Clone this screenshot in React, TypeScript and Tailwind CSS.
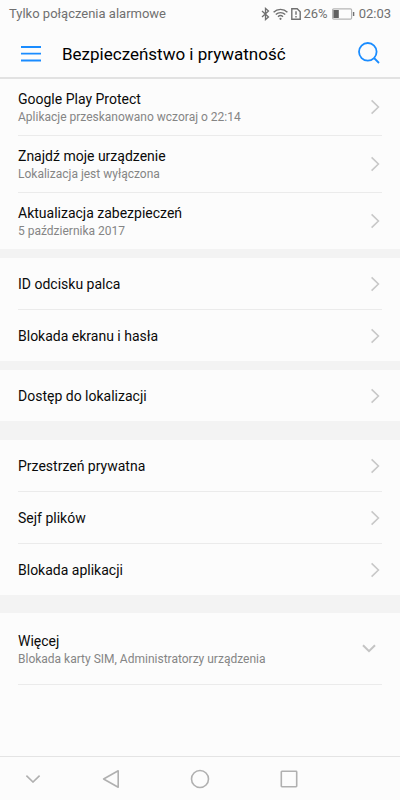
import { clsx } from "clsx"

type Item = { title: string; summary?: string }

const sections: { items: Item[]; gap: string }[] = [
  {
    items: [
      { title: "Google Play Protect", summary: "Aplikacje przeskanowano wczoraj o 22:14" },
      { title: "Znajdź moje urządzenie", summary: "Lokalizacja jest wyłączona" },
      { title: "Aktualizacja zabezpieczeń", summary: "5 października 2017" },
    ],
    gap: "h-[9px]",
  },
  { items: [{ title: "ID odcisku palca" }, { title: "Blokada ekranu i hasła" }], gap: "h-[9px]" },
  { items: [{ title: "Dostęp do lokalizacji" }], gap: "h-[19px]" },
  {
    items: [{ title: "Przestrzeń prywatna" }, { title: "Sejf plików" }, { title: "Blokada aplikacji" }],
    gap: "h-[18px]",
  },
]

function StatusBar() {
  return (
    <div className="flex h-7 items-center justify-between px-[9px] text-[13px] text-[#707070]">
      <span>Tylko połączenia alarmowe</span>
      <div className="flex items-center">
        <svg className="h-[14px] w-[9px]" viewBox="0 0 9 14" fill="none" stroke="currentColor" strokeWidth="1.3">
          <path d="M1 4l6.5 6L4.5 12.6V1.4l3 2.6L1 10" />
        </svg>
        <svg className="ml-[3px] h-3 w-[15px]" viewBox="0 0 15 12" fill="none" stroke="currentColor" strokeWidth="1.4">
          <path d="M.6 4.2a9.8 9.8 0 0 1 13.8 0M2.8 6.6a6.7 6.7 0 0 1 9.4 0M5 8.8a3.6 3.6 0 0 1 5 0" />
          <circle cx="7.5" cy="10.8" r="1.1" fill="currentColor" stroke="none" />
        </svg>
        <svg className="ml-[3px] h-3 w-[10px]" viewBox="0 0 10 12" fill="none" stroke="currentColor" strokeWidth="1.4">
          <path d="M.8.8h5.4l3 3v7.4H.8zM5 3.2v3.6M5 8v1.4" />
        </svg>
        <span className="ml-[2px]">26%</span>
        <svg className="ml-1 h-3 w-[23px]" viewBox="0 0 23 12" fill="none">
          <rect x=".6" y=".9" width="19" height="10.2" rx="1.2" stroke="#b5b5b5" strokeWidth="1.2" />
          <rect x="1.4" y="2" width="5.4" height="8" fill="#606060" />
          <path d="M21.6 4v4" stroke="#707070" strokeWidth="1.4" />
        </svg>
        <span className="ml-1">02:03</span>
      </div>
    </div>
  )
}

function Header() {
  return (
    <header className="flex h-[51px] items-center border-b-2 border-[#e2e2e2] px-5 text-[#1a8cff]">
      <button type="button" aria-label="Menu">
        <svg className="h-5 w-[22px]" viewBox="0 0 22 20" stroke="currentColor" strokeWidth="1.8">
          <path d="M1 4h20M1 10.7h20M1 17.5h20" />
        </svg>
      </button>
      <h1 className="ml-5 flex-1 pt-[2px] text-[17px] leading-6 text-black">Bezpieczeństwo i prywatność</h1>
      <button type="button" aria-label="Szukaj" className="pt-px">
        <svg className="h-[22px] w-[22px]" viewBox="0 0 22 22" fill="none" stroke="currentColor" strokeWidth="1.8">
          <circle cx="9.8" cy="9.8" r="8.8" />
          <path d="M16 16l5 5" />
        </svg>
      </button>
    </header>
  )
}

function ItemText({ title, summary }: Item) {
  return (
    <span className={clsx("flex flex-col text-left", summary && "pt-[2px]")}>
      <span className="text-[14px] leading-[18px] text-[#0a0a0a]">{title}</span>
      {summary && <span className="text-[12px] leading-[18px] text-[#858585]">{summary}</span>}
    </span>
  )
}

function Row({ item }: { item: Item }) {
  return (
    <li>
      <button
        type="button"
        className={clsx("flex w-full items-center justify-between pr-[2px]", item.summary ? "h-14" : "h-[51px]")}
      >
        <ItemText {...item} />
        <svg className="h-4 w-[10px]" viewBox="0 0 10 16" fill="none" stroke="#c8c8c8" strokeWidth="1.6">
          <path d="M1.6 1.4L8.4 8l-6.8 6.6" />
        </svg>
      </button>
    </li>
  )
}

function NavBar() {
  return (
    <nav className="grid h-11 grid-cols-[3fr_4fr_4fr_4fr_3fr] border-t border-[#e4e4e4] text-[#b0b0b0]">
      <button type="button" aria-label="Ukryj" className="flex items-center justify-center">
        <svg className="h-2 w-4" viewBox="0 0 16 8" fill="none" stroke="currentColor" strokeWidth="1.6">
          <path d="M1.4.6L8 7 14.6.6" />
        </svg>
      </button>
      <button type="button" aria-label="Wstecz" className="flex items-center justify-center">
        <svg className="h-5 w-[18px]" viewBox="0 0 18 20" fill="none" stroke="currentColor" strokeWidth="1.6" strokeLinejoin="round">
          <path d="M16.2 1.8v16.4L1.6 10z" />
        </svg>
      </button>
      <button type="button" aria-label="Ekran główny" className="flex items-center justify-center">
        <svg className="h-5 w-5" viewBox="0 0 20 20" fill="none" stroke="currentColor" strokeWidth="1.6">
          <circle cx="10" cy="10" r="8.5" />
        </svg>
      </button>
      <button type="button" aria-label="Ostatnie" className="flex items-center justify-center">
        <svg className="h-[18px] w-[18px]" viewBox="0 0 18 18" fill="none" stroke="currentColor" strokeWidth="1.6">
          <rect x="1.3" y="1.3" width="15.4" height="15.4" rx=".6" />
        </svg>
      </button>
    </nav>
  )
}

export default function App() {
  return (
    <div className="flex min-h-screen flex-col bg-[#fcfcfc] font-['Roboto',sans-serif]">
      <StatusBar />
      <Header />
      <main className="flex-1">
        {sections.map((section) => (
          <section key={section.items[0].title}>
            <ul className="mx-[18px] divide-y divide-[#ebebeb]">
              {section.items.map((item) => (
                <Row key={item.title} item={item} />
              ))}
            </ul>
            <div className={clsx("bg-[#f3f3f3]", section.gap)} />
          </section>
        ))}
        <div className="mx-[18px] border-b border-[#ebebeb]">
          <button type="button" aria-expanded={false} className="flex h-[71px] w-full items-center justify-between pr-[6px]">
            <ItemText title="Więcej" summary="Blokada karty SIM, Administratorzy urządzenia" />
            <svg className="h-[9px] w-[14px]" viewBox="0 0 14 9" fill="none" stroke="#c4c4c4" strokeWidth="2">
              <path d="M1 1.2l6 6 6-6" />
            </svg>
          </button>
        </div>
      </main>
      <NavBar />
    </div>
  )
}
